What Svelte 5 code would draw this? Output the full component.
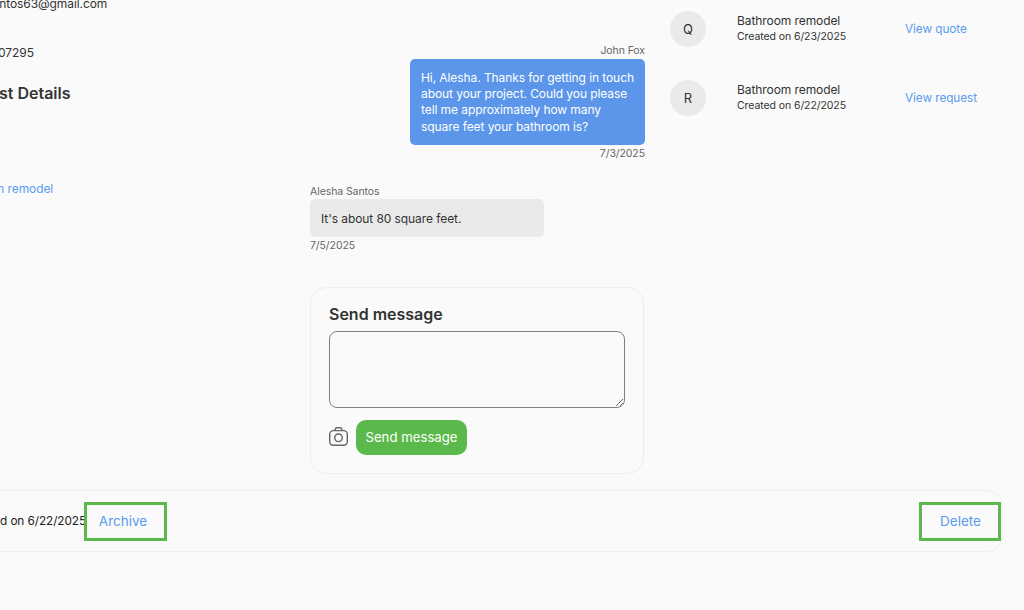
<script>
  const records = [
    { letter: "Q", title: "Bathroom remodel", created: "6/23/2025", link: "View quote" },
    { letter: "R", title: "Bathroom remodel", created: "6/22/2025", link: "View request" }
  ];
</script>

<style>
  :global(body) {
    margin: 0;
    background: #fafafa;
  }

  .page {
    width: 1024px;
    height: 610px;
    overflow: hidden;
    background: #fafafa;
    color: #333;
    font-family: Inter, "Liberation Sans", sans-serif;
    font-size: 12px;
    letter-spacing: -0.08px;
  }

  .columns {
    display: flex;
    margin-top: -6px;
    margin-left: -50px;
  }

  .details {
    width: 360px;
    flex: none;
    padding-top: 1px;
    line-height: 18px;
    white-space: nowrap;
  }

  .details p {
    margin: 0;
  }

  .details .phone {
    margin-top: 31px;
  }

  h2 {
    margin: 19px 0 0;
    font-size: 16px;
    line-height: 24px;
    font-weight: 600;
    letter-spacing: 0;
  }

  .details a {
    display: block;
    margin-top: 75px;
  }

  a {
    color: #5b9bf0;
    text-decoration: none;
  }

  .thread {
    width: 335px;
    flex: none;
    padding-top: 50px;
  }

  .meta {
    font-size: 10.5px;
    line-height: 14px;
    color: #666;
  }

  .mine {
    display: flex;
    flex-direction: column;
    align-items: flex-end;
  }

  .theirs {
    margin-top: 24px;
  }

  .bubble {
    box-sizing: border-box;
    padding: 11px;
    border-radius: 5px;
    line-height: 16.2px;
  }

  .mine .bubble {
    width: 235px;
    height: 86px;
    margin: 1px 0 2px;
    background: #5b96ea;
    color: #fff;
  }

  .theirs .bubble {
    width: 234px;
    height: 38px;
    margin: 0 0 2px;
    padding-top: 12px;
    background: #eaeaea;
  }

  .card {
    box-sizing: border-box;
    width: 334px;
    height: 187px;
    margin-top: 34px;
    padding: 14px 18px;
    border: 1px solid #eee;
    border-radius: 16px;
  }

  h3 {
    margin: 0 0 5px;
    font-size: 16px;
    line-height: 24px;
    font-weight: 600;
    letter-spacing: 0;
  }

  textarea {
    display: block;
    box-sizing: border-box;
    width: 296px;
    height: 77px;
    border: 1px solid #808080;
    border-radius: 8px;
    background: #fafafa;
  }

  .actions {
    display: flex;
    align-items: center;
    gap: 8px;
    margin-top: 12px;
  }

  .camera {
    width: 19px;
    height: 19px;
    flex: none;
    margin-top: -2px;
  }

  .send {
    width: 111px;
    height: 35px;
    padding: 0 0 2px;
    border: none;
    border-radius: 10px;
    background: #5ab94a;
    color: #fff;
    font-family: inherit;
    font-size: 13.2px;
  }

  .records {
    padding-top: 17px;
    padding-left: 25px;
  }

  .record {
    display: flex;
    align-items: center;
    height: 36px;
    margin-bottom: 33px;
  }

  .record a {
    padding-bottom: 1px;
    font-size: 11.8px;
  }

  .avatar {
    display: flex;
    align-items: center;
    justify-content: center;
    width: 36px;
    height: 36px;
    flex: none;
    border-radius: 50%;
    background: #eaeaea;
    font-size: 13px;
  }

  .info {
    width: 168px;
    flex: none;
    margin-left: 31px;
    padding-bottom: 2px;
    line-height: 16px;
  }

  .info small {
    display: block;
    font-size: 10.5px;
    line-height: 15px;
  }

  .bar {
    display: flex;
    align-items: center;
    justify-content: space-between;
    box-sizing: border-box;
    height: 62px;
    margin: 16px 21px 0 -62px;
    padding-right: 1px;
    border: 1px solid #eee;
    border-radius: 0 16px 16px 0;
    color: #222;
    font-size: 11.8px;
    white-space: nowrap;
  }

  .bar-left {
    display: flex;
    align-items: center;
    justify-content: flex-end;
    width: 228px;
  }

  .box {
    display: flex;
    align-items: center;
    justify-content: center;
    box-sizing: border-box;
    height: 39px;
    flex: none;
    border: 3px solid #5ab94a;
    color: #5b9bf0;
    font-size: 13.5px;
    letter-spacing: 0;
  }

  .archive {
    width: 83px;
    margin-left: -2px;
    padding-right: 5px;
  }

  .delete {
    width: 82px;
    padding-left: 1px;
  }
</style>

<div class="page">
  <div class="columns">
    <section class="details">
      <p>aleshasantos63@gmail.com</p>
      <p class="phone">(555) 5607295</p>
      <h2>Request Details</h2>
      <a href="#request">Bathroom remodel</a>
    </section>

    <section class="thread">
      <div class="mine">
        <div class="meta">John Fox</div>
        <div class="bubble">Hi, Alesha. Thanks for getting in touch about your project. Could you please tell me approximately how many square feet your bathroom is?</div>
        <div class="meta">7/3/2025</div>
      </div>

      <div class="theirs">
        <div class="meta">Alesha Santos</div>
        <div class="bubble">It's about 80 square feet.</div>
        <div class="meta">7/5/2025</div>
      </div>

      <form class="card">
        <h3>Send message</h3>
        <textarea></textarea>
        <div class="actions">
          <svg class="camera" viewBox="0 0 19 19" fill="none" stroke="#666" stroke-width="1.4">
            <rect x="0.7" y="3.6" width="17.6" height="14.6" rx="3.6" />
            <circle cx="9.5" cy="10.8" r="3.8" />
            <path d="M5.8 3.6 L6.6 1.5 Q6.8 0.8 7.5 0.8 H11.5 Q12.2 0.8 12.4 1.5 L13.2 3.6" />
          </svg>
          <button class="send" type="button">Send message</button>
        </div>
      </form>
    </section>

    <section class="records">
      {#each records as record}
        <div class="record">
          <div class="avatar">{record.letter}</div>
          <div class="info">
            {record.title}
            <small>Created on {record.created}</small>
          </div>
          <a href="#record">{record.link}</a>
        </div>
      {/each}
    </section>
  </div>

  <div class="bar">
    <div class="bar-left">
      <span>Created on 6/22/2025</span>
      <div class="box archive">Archive</div>
    </div>
    <div class="box delete">Delete</div>
  </div>
</div>
